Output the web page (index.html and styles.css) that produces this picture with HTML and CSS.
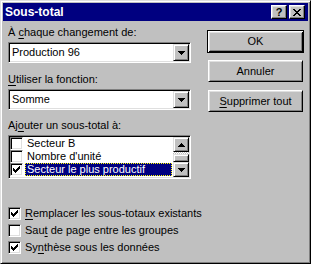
FILE: index.html
```html
<!DOCTYPE html>
<html lang="fr">
<head>
<meta charset="utf-8">
<title>Sous-total</title>
<link rel="stylesheet" href="styles.css">
</head>
<body>
<div class="window">
  <div class="titlebar">
    <span class="title">Sous-total</span>
    <span class="tbtn help">?</span>
    <span class="tbtn close">
      <svg width="8" height="7" viewBox="0 0 8 7" shape-rendering="crispEdges"><path d="M0 0h2v1H0zM6 0h2v1H6zM1 1h2v1H1zM5 1h2v1H5zM2 2h4v1H2zM3 3h2v1H3zM2 4h4v1H2zM1 5h2v1H1zM5 5h2v1H5zM0 6h2v1H0zM6 6h2v1H6z" fill="#000"/></svg>
    </span>
  </div>
  <div class="content">
    <div class="main">
      <div class="left">
        <div class="label">À <u>c</u>haque changement de:</div>
        <div class="combo">
          <span class="combo-text">Production 96</span>
          <span class="dropbtn"><svg width="7" height="4" viewBox="0 0 7 4" shape-rendering="crispEdges"><path d="M0 0h7v1H0zM1 1h5v1H1zM2 2h3v1H2zM3 3h1v1H3z" fill="#000"/></svg></span>
        </div>
        <div class="label gap10"><u>U</u>tiliser la fonction:</div>
        <div class="combo">
          <span class="combo-text">Somme</span>
          <span class="dropbtn"><svg width="7" height="4" viewBox="0 0 7 4" shape-rendering="crispEdges"><path d="M0 0h7v1H0zM1 1h5v1H1zM2 2h3v1H2zM3 3h1v1H3z" fill="#000"/></svg></span>
        </div>
        <div class="label gap9">Aj<u>o</u>uter un sous-total à:</div>
        <div class="listbox">
          <div class="items">
            <div class="item"><span class="check"></span><span class="itext">Secteur B</span></div>
            <div class="item"><span class="check"></span><span class="itext">Nombre d'unité</span></div>
            <div class="item"><span class="check"><svg width="7" height="7" viewBox="0 0 7 7" shape-rendering="crispEdges"><path d="M0 2h1v3H0zM1 3h1v3H1zM2 4h1v3H2zM3 3h1v3H3zM4 2h1v3H4zM5 1h1v3H5zM6 0h1v3H6z" fill="#000"/></svg></span><span class="itext selected">Secteur le plus productif</span></div>
          </div>
          <div class="scroll">
            <span class="sbtn up"><svg width="7" height="4" viewBox="0 0 7 4" shape-rendering="crispEdges"><path d="M3 0h1v1H3zM2 1h3v1H2zM1 2h5v1H1zM0 3h7v1H0z" fill="#000"/></svg></span>
            <span class="track"></span>
            <span class="thumb"></span>
            <span class="sbtn down"><svg width="7" height="4" viewBox="0 0 7 4" shape-rendering="crispEdges"><path d="M0 0h7v1H0zM1 1h5v1H1zM2 2h3v1H2zM3 3h1v1H3z" fill="#000"/></svg></span>
          </div>
        </div>
      </div>
      <div class="right">
        <div class="btn default">OK</div>
        <div class="btn b2">Annuler</div>
        <div class="btn b3"><u>S</u>upprimer tout</div>
      </div>
    </div>
    <div class="options">
      <div class="opt"><span class="check"><svg width="7" height="7" viewBox="0 0 7 7" shape-rendering="crispEdges"><path d="M0 2h1v3H0zM1 3h1v3H1zM2 4h1v3H2zM3 3h1v3H3zM4 2h1v3H4zM5 1h1v3H5zM6 0h1v3H6z" fill="#000"/></svg></span><span><u>R</u>emplacer les sous-totaux existants</span></div>
      <div class="opt"><span class="check"></span><span>Sau<u>t</u> de page entre les groupes</span></div>
      <div class="opt"><span class="check"><svg width="7" height="7" viewBox="0 0 7 7" shape-rendering="crispEdges"><path d="M0 2h1v3H0zM1 3h1v3H1zM2 4h1v3H2zM3 3h1v3H3zM4 2h1v3H4zM5 1h1v3H5zM6 0h1v3H6z" fill="#000"/></svg></span><span>Sy<u>n</u>thèse sous les données</span></div>
    </div>
  </div>
</div>
</body>
</html>
```
FILE: styles.css
```css
html, body {
  margin: 0;
  padding: 0;
  background: #c0c0c0;
}
body {
  font-family: "Liberation Sans", Arial, sans-serif;
  font-size: 11px;
  line-height: 13px;
  color: #000;
}
u { text-decoration: underline; text-underline-offset: 2px; }

.window {
  width: 311px;
  height: 264px;
  box-sizing: border-box;
  border: 1px solid;
  border-color: #dfdfdf #000 #000 #dfdfdf;
  box-shadow: inset 1px 1px #fff, inset -1px -1px #808080;
  padding: 2px;
  background: #c0c0c0;
  display: flex;
  flex-direction: column;
}

.titlebar {
  height: 18px;
  background: #000080;
  display: flex;
  align-items: center;
  padding: 0 3px 0 2px;
  gap: 2px;
}
.title {
  flex: 1;
  color: #fff;
  font-weight: bold;
  font-size: 12px;
  line-height: 14px;
  padding-left: 0;
}
.tbtn {
  width: 16px;
  height: 14px;
  box-sizing: border-box;
  background: #c0c0c0;
  border: 1px solid;
  border-color: #fff #000 #000 #fff;
  box-shadow: inset -1px -1px #808080, inset 1px 1px #dfdfdf;
  display: flex;
  align-items: center;
  justify-content: center;
}
.help {
  font-weight: bold;
  font-size: 11px;
  line-height: 12px;
  color: #000;
}

.content {
  padding: 5px 4px 0 5px;
  display: flex;
  flex-direction: column;
}
.main {
  display: flex;
}
.left {
  width: 183px;
  display: flex;
  flex-direction: column;
}
.label { height: 13px; white-space: nowrap; }
.gap10 { margin-top: 10px; }
.gap9 { margin-top: 9px; }

.combo {
  margin-top: 3px;
  height: 21px;
  box-sizing: border-box;
  border: 1px solid;
  border-color: #808080 #fff #fff #808080;
  box-shadow: inset 1px 1px #000, inset -1px -1px #dfdfdf;
  padding: 1px;
  background: #fff;
  display: flex;
}
.combo-text {
  flex: 1;
  padding-left: 2px;
  line-height: 17px;
  white-space: nowrap;
}
.dropbtn, .sbtn, .thumb {
  width: 16px;
  box-sizing: border-box;
  background: #c0c0c0;
  border: 1px solid;
  border-color: #dfdfdf #000 #000 #dfdfdf;
  box-shadow: inset 1px 1px #fff, inset -1px -1px #808080;
  display: flex;
  align-items: center;
  justify-content: center;
}
.dropbtn { height: 17px; }

.listbox {
  margin-top: 3px;
  height: 44px;
  box-sizing: border-box;
  border: 1px solid;
  border-color: #808080 #fff #fff #808080;
  box-shadow: inset 1px 1px #000, inset -1px -1px #dfdfdf;
  padding: 1px;
  background: #fff;
  display: flex;
}
.items {
  flex: 1;
  display: flex;
  flex-direction: column;
}
.item {
  height: 13px;
  display: flex;
  align-items: center;
}
.item .check { margin-left: 0; }
.itext {
  margin-left: 2px;
  padding-left: 1px;
  border: 1px solid transparent;
  line-height: 11px;
  height: 11px;
  white-space: nowrap;
}
.itext.selected {
  flex: 1;
  margin-right: 1px;
  background: #000080;
  color: #fff;
  border: 1px dotted #ffff00;
}
.scroll {
  width: 16px;
  display: flex;
  flex-direction: column;
}
.sbtn { height: 15px; }
.track {
  height: 2px;
  background: repeating-conic-gradient(#c0c0c0 0 25%, #fff 0 50%) 0 0 / 2px 2px;
}
.thumb { height: 8px; }

.check {
  width: 13px;
  height: 13px;
  box-sizing: border-box;
  flex: none;
  background: #fff;
  border: 1px solid;
  border-color: #808080 #fff #fff #808080;
  box-shadow: inset 1px 1px #000, inset -1px -1px #dfdfdf;
  display: flex;
  align-items: center;
  justify-content: center;
}

.right {
  margin-left: 16px;
  margin-top: 4px;
  width: 97px;
  display: flex;
  flex-direction: column;
}
.btn {
  height: 22px;
  margin: 0 1px;
  box-sizing: border-box;
  border: 1px solid;
  border-color: #fff #000 #000 #fff;
  box-shadow: inset 1px 1px #dfdfdf, inset -1px -1px #808080;
  display: flex;
  align-items: center;
  justify-content: center;
  white-space: nowrap;
}
.btn.default {
  height: 23px;
  margin: 0;
  border-color: #000;
  box-shadow: inset 1px 1px #fff, inset -1px -1px #000, inset 2px 2px #dfdfdf, inset -2px -2px #808080;
}
.b2 { margin-top: 7px; }
.b3 { margin-top: 8px; }

.options {
  margin-top: 28px;
  display: flex;
  flex-direction: column;
  gap: 4px;
}
.opt {
  height: 13px;
  display: flex;
  align-items: center;
  gap: 4px;
  white-space: nowrap;
}
```
